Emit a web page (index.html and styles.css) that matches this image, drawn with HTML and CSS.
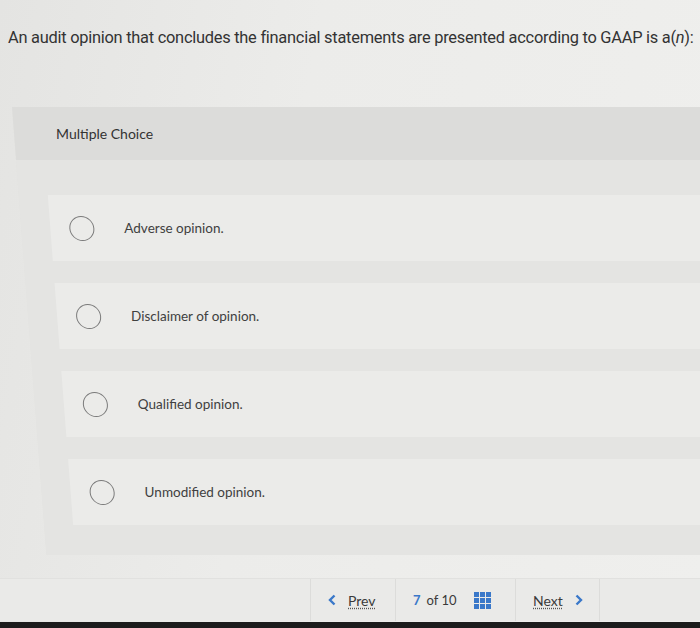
FILE: index.html
```html
<!DOCTYPE html>
<html lang="en">
<head>
  <meta charset="UTF-8" />
  <meta name="viewport" content="width=device-width, initial-scale=1.0" />
  <title>Multiple Choice</title>
  <link rel="stylesheet" href="styles.css">
</head>
<body>
  <div class="page">
    <p class="question">An audit opinion that concludes the financial statements are presented according to GAAP is a(<i>n</i>):</p>

    <div class="card">
      <div class="card-header"><span class="upright">Multiple Choice</span></div>
      <div class="options">
        <label class="option">
          <span class="radio"></span>
          <span class="option-text upright">Adverse opinion.</span>
        </label>
        <label class="option">
          <span class="radio"></span>
          <span class="option-text upright">Disclaimer of opinion.</span>
        </label>
        <label class="option">
          <span class="radio"></span>
          <span class="option-text upright">Qualified opinion.</span>
        </label>
        <label class="option">
          <span class="radio"></span>
          <span class="option-text upright">Unmodified opinion.</span>
        </label>
      </div>
    </div>

    <div class="nav">
      <a class="nav-item prev">
        <svg class="chevron" width="8" height="12" viewBox="0 0 8 12"><path d="M6.5 1.5 L2 6 L6.5 10.5" fill="none" stroke="#3a78c9" stroke-width="2.4"/></svg>
        <span class="nav-link">Prev</span>
      </a>
      <div class="nav-item count">
        <span class="current">7</span> of 10
        <svg class="grid-icon" width="17" height="17" viewBox="0 0 17 17">
          <rect x="0" y="0" width="5" height="5" fill="#3a78c9"/>
          <rect x="6" y="0" width="5" height="5" fill="#3a78c9"/>
          <rect x="12" y="0" width="5" height="5" fill="#3a78c9"/>
          <rect x="0" y="6" width="5" height="5" fill="#3a78c9"/>
          <rect x="6" y="6" width="5" height="5" fill="#3a78c9"/>
          <rect x="12" y="6" width="5" height="5" fill="#3a78c9"/>
          <rect x="0" y="12" width="5" height="5" fill="#3a78c9"/>
          <rect x="6" y="12" width="5" height="5" fill="#3a78c9"/>
          <rect x="12" y="12" width="5" height="5" fill="#3a78c9"/>
        </svg>
      </div>
      <a class="nav-item next">
        <span class="nav-link">Next</span>
        <svg class="chevron" width="8" height="12" viewBox="0 0 8 12"><path d="M1.5 1.5 L6 6 L1.5 10.5" fill="none" stroke="#3a78c9" stroke-width="2.4"/></svg>
      </a>
    </div>
  </div>
  <div class="screen-edge"></div>
</body>
</html>
```

FILE: styles.css
```css
html, body {
  margin: 0;
  height: 100%;
}
body {
  font-family: Lato, "Open Sans", sans-serif;
  background: linear-gradient(100deg, #e4e4e2, #ececea 40%, #efefed);
  color: #3a3a3a;
  display: flex;
  flex-direction: column;
  overflow: hidden;
}
.page {
  flex: 1;
}
.question {
  margin: 0;
  padding: 27px 0 0 8px;
  font-family: Roboto, sans-serif;
  font-size: 16.4px;
  letter-spacing: -0.25px;
  line-height: 22px;
  color: #333;
  white-space: nowrap;
}
.card {
  margin: 58px 0 0 12px;
  background: #e2e2e0;
  transform: skewX(4.4deg);
  transform-origin: top left;
}
.upright {
  display: inline-block;
  transform: skewX(-4.4deg);
}
.card-header {
  height: 53px;
  padding-left: 42px;
  display: flex;
  align-items: center;
  background: #dcdcda;
  font-size: 14px;
  color: #333;
}
.options {
  padding: 35px 0 30px 29px;
  background: #e4e4e2;
}
.option {
  display: flex;
  align-items: center;
  height: 66px;
  margin-bottom: 22px;
  padding-left: 19px;
  background: #ebebe9;
}
.option:last-child {
  margin-bottom: 0;
}
.radio {
  width: 23px;
  height: 23px;
  border: 1.6px solid #7a7a7a;
  border-radius: 50%;
  flex-shrink: 0;
}
.option-text {
  margin-left: 30px;
  font-size: 13.5px;
  color: #404040;
}
.nav {
  display: flex;
  margin-top: 23px;
  padding-left: 310px;
  height: 42px;
  border-top: 1px solid #e1e1df;
  background: #eaeae8;
}
.nav-item {
  display: flex;
  align-items: center;
  border-left: 1px solid #dcdcda;
  font-size: 14px;
  color: #3a3a3a;
}
.prev {
  width: 85px;
  padding-left: 17px;
  box-sizing: border-box;
}
.prev .nav-link {
  margin-left: 12px;
}
.count {
  width: 120px;
  padding-left: 17px;
  box-sizing: border-box;
  font-size: 13px;
}
.current {
  color: #3a78c9;
  font-weight: bold;
  margin-right: 6px;
}
.grid-icon {
  margin-left: 17px;
}
.next {
  width: 85px;
  padding-left: 17px;
  box-sizing: border-box;
  border-right: 1px solid #dcdcda;
}
.next .nav-link {
  margin-right: 12px;
}
.nav-link {
  text-decoration: underline dotted #555;
  text-underline-offset: 2px;
}
.screen-edge {
  height: 6px;
  background: #1c1c1c;
}
```
